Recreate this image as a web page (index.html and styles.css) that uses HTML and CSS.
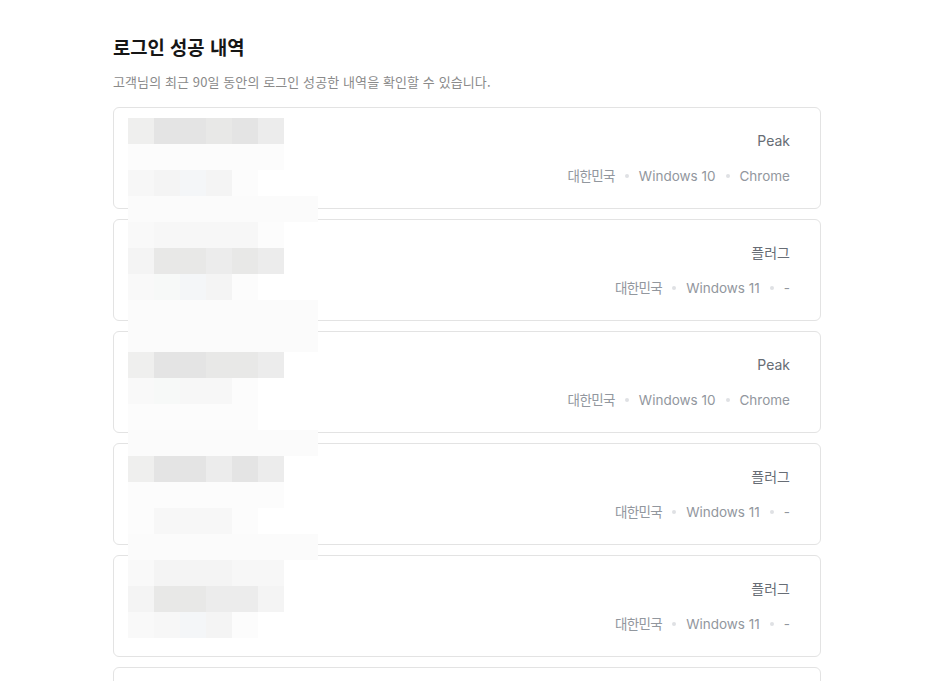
FILE: index.html
```html
<!DOCTYPE html>
<html lang="ko">
<head>
<meta charset="utf-8">
<title>로그인 성공 내역</title>
<link rel="stylesheet" href="styles.css">
</head>
<body>
<main class="page">
  <h1 class="title">로그인 성공 내역</h1>
  <p class="desc">고객님의 최근 90일 동안의 로그인 성공한 내역을 확인할 수 있습니다.</p>
  <ul class="list">
    <li class="card"><div class="left"></div><div class="right"><div class="name">Peak</div><div class="meta"><span>대한민국</span><i class="dot"></i><span>Windows 10</span><i class="dot"></i><span>Chrome</span></div></div></li>
    <li class="card"><div class="left"></div><div class="right"><div class="name">플러그</div><div class="meta"><span>대한민국</span><i class="dot"></i><span>Windows 11</span><i class="dot"></i><span>-</span></div></div></li>
    <li class="card"><div class="left"></div><div class="right"><div class="name">Peak</div><div class="meta"><span>대한민국</span><i class="dot"></i><span>Windows 10</span><i class="dot"></i><span>Chrome</span></div></div></li>
    <li class="card"><div class="left"></div><div class="right"><div class="name">플러그</div><div class="meta"><span>대한민국</span><i class="dot"></i><span>Windows 11</span><i class="dot"></i><span>-</span></div></div></li>
    <li class="card"><div class="left"></div><div class="right"><div class="name">플러그</div><div class="meta"><span>대한민국</span><i class="dot"></i><span>Windows 11</span><i class="dot"></i><span>-</span></div></div></li>
    <li class="card"><div class="left"></div><div class="right"><div class="name">플러그</div><div class="meta"><span>대한민국</span><i class="dot"></i><span>Windows 11</span><i class="dot"></i><span>-</span></div></div></li>
  </ul>
  <div class="mosaic" aria-hidden="true">
    <div class="row"><b class="s1"></b><b class="s2"></b><b class="s2"></b><b class="s3"></b><b class="s2"></b><b class="s4"></b></div>
    <div class="row"><b class="s8"></b><b class="s8"></b><b class="s8"></b><b class="s8"></b><b class="s8"></b><b class="s8"></b></div>
    <div class="row"><b class="s6"></b><b class="s5"></b><b class="sb"></b><b class="s5"></b><b class="s8"></b></div>
    <div class="row"><b class="wide"></b></div>
    <div class="row"><b class="s7"></b><b class="s6"></b><b class="s6"></b><b class="s6"></b><b class="s6"></b><b class="s8"></b></div>
    <div class="row"><b class="s5"></b><b class="s3"></b><b class="s3"></b><b class="s4"></b><b class="s3"></b><b class="s4"></b></div>
    <div class="row"><b class="s7"></b><b class="sg"></b><b class="sb"></b><b class="s5"></b><b class="s8"></b></div>
    <div class="row"><b class="wide"></b></div>
    <div class="row"><b class="wide"></b></div>
    <div class="row"><b class="s1"></b><b class="s2"></b><b class="s2"></b><b class="s3"></b><b class="s3"></b><b class="s4"></b></div>
    <div class="row"><b class="s7"></b><b class="sg"></b><b class="s6"></b><b class="s6"></b><b class="s8"></b></div>
    <div class="row"><b class="s8"></b><b class="s8"></b><b class="s8"></b><b class="s8"></b><b class="s8"></b></div>
    <div class="row"><b class="wide"></b></div>
    <div class="row"><b class="s1"></b><b class="s2"></b><b class="s2"></b><b class="s4"></b><b class="s2"></b><b class="s4"></b></div>
    <div class="row"><b class="s8"></b><b class="s8"></b><b class="s8"></b><b class="s8"></b><b class="s8"></b><b class="s8"></b></div>
    <div class="row"><b class="s8"></b><b class="s6"></b><b class="s6"></b><b class="s6"></b><b class="s8"></b></div>
    <div class="row"><b class="wide"></b></div>
    <div class="row"><b class="s7"></b><b class="s5"></b><b class="s5"></b><b class="s5"></b><b class="s6"></b><b class="s6"></b></div>
    <div class="row"><b class="s5"></b><b class="s3"></b><b class="s3"></b><b class="s4"></b><b class="s4"></b><b class="s5"></b></div>
    <div class="row"><b class="s7"></b><b class="s6"></b><b class="sb"></b><b class="s5"></b><b class="s8"></b></div>
  </div>
</main>
</body>
</html>
```

FILE: styles.css
```css
html, body {
  margin: 0;
  padding: 0;
  background: #ffffff;
}

body {
  font-family: "Inter", "Noto Sans CJK KR", sans-serif;
  color: #111111;
  padding-right: 1px;
}

.page {
  position: relative;
  width: 708px;
  margin: 0 auto;
  padding-top: 34px;
}

.title {
  margin: 0;
  font-family: "Noto Sans CJK KR", sans-serif;
  font-size: 18.8px;
  line-height: 26px;
  font-weight: 600;
  color: #161616;
}

.desc {
  margin: 13px 0 0;
  font-family: "Noto Sans CJK KR", sans-serif;
  font-size: 13px;
  line-height: 18px;
  color: #8a8a8a;
  letter-spacing: 0.1px;
}

.list {
  list-style: none;
  margin: 16px 0 0;
  padding: 0;
  display: flex;
  flex-direction: column;
  gap: 10px;
}

.card {
  box-sizing: border-box;
  height: 102px;
  border: 1px solid #e3e3e3;
  border-radius: 6px;
  display: flex;
  align-items: center;
  justify-content: space-between;
  padding: 0 30px 0 14px;
}

.right {
  display: flex;
  flex-direction: column;
  align-items: flex-end;
  gap: 15px;
}

.name {
  font-size: 14px;
  line-height: 20px;
  font-weight: 400;
  color: #676d75;
}

.meta {
  display: flex;
  align-items: center;
  gap: 10px;
  font-size: 13.5px;
  line-height: 20px;
  color: #92979e;
}

.meta span:first-child {
  letter-spacing: -0.6px;
}

.dot {
  display: block;
  width: 4px;
  height: 4px;
  border-radius: 50%;
  background: #dfe1e4;
}

.mosaic {
  position: absolute;
  left: 15px;
  top: 118px;
  display: flex;
  flex-direction: column;
}

.row {
  display: flex;
  height: 26px;
}

.row b {
  display: block;
  width: 26px;
  height: 26px;
}

.row b.wide {
  width: 190px;
  background: #fbfbfb;
}

.s1 { background: #efefee; }
.s2 { background: #e4e4e4; }
.s3 { background: #e8e8e7; }
.s4 { background: #ececec; }
.s5 { background: #f4f4f4; }
.s6 { background: #f7f7f7; }
.s7 { background: #f9f9f9; }
.s8 { background: #fcfcfc; }
.sb { background: #f4f6f8; }
.sg { background: #f7f9f8; }
```
